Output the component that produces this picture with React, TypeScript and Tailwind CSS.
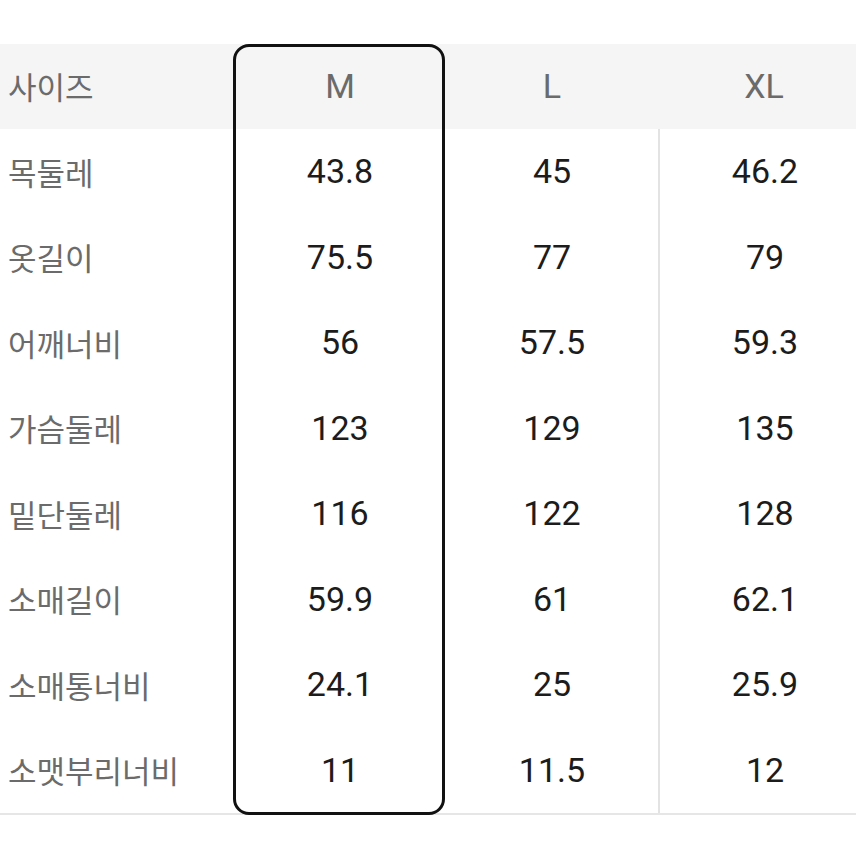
import React from 'react';

type Row = { label: string; values: [string, string, string] };

const rows: Row[] = [
    { label: '목둘레', values: ['43.8', '45', '46.2'] },
    { label: '옷길이', values: ['75.5', '77', '79'] },
    { label: '어깨너비', values: ['56', '57.5', '59.3'] },
    { label: '가슴둘레', values: ['123', '129', '135'] },
    { label: '밑단둘레', values: ['116', '122', '128'] },
    { label: '소매길이', values: ['59.9', '61', '62.1'] },
    { label: '소매통너비', values: ['24.1', '25', '25.9'] },
    { label: '소맷부리너비', values: ['11', '11.5', '12'] },
];

const sizes = ['M', 'L', 'XL'];

const labelFont = { fontFamily: '"Noto Sans CJK KR", "Noto Sans", sans-serif' };

export default function App() {
    return (
        <div className="w-[856px] h-[856px] bg-white overflow-hidden pt-[44px]" style={{ fontFamily: 'Roboto, "Noto Sans CJK KR", sans-serif' }}>
            <div className="relative w-[870px]">
                {/* Header */}
                <div className="grid grid-cols-[234px_212px_212px_212px] h-[85px] bg-[#f5f5f5] items-center">
                    <div className="pl-2 text-[31px] text-[#6b6b6b]" style={labelFont}>사이즈</div>
                    {sizes.map((s) => (
                        <div key={s} className="text-center text-[34px] text-[#6b6b6b]">{s}</div>
                    ))}
                </div>

                {/* Body */}
                <div className="border-b-2 border-[#e6e6e6]">
                    {rows.map((r) => (
                        <div key={r.label} className="grid grid-cols-[234px_212px_212px_212px] h-[85.5px]">
                            <div className="pl-2 flex items-center text-[31px] text-[#6b6b6b]" style={labelFont}>{r.label}</div>
                            <div className="flex items-center justify-center text-[34px] text-[#1c1c1c]">{r.values[0]}</div>
                            <div className="flex items-center justify-center text-[34px] text-[#1c1c1c]">{r.values[1]}</div>
                            <div className="flex items-center justify-center text-[34px] text-[#1c1c1c] border-l-2 border-[#e3e3e3]">{r.values[2]}</div>
                        </div>
                    ))}
                </div>

                {/* Selected size outline */}
                <div className="absolute left-[233px] top-0 w-[212px] h-[771px] border-[3px] border-[#111] rounded-[16px] pointer-events-none" />
            </div>
        </div>
    );
}
